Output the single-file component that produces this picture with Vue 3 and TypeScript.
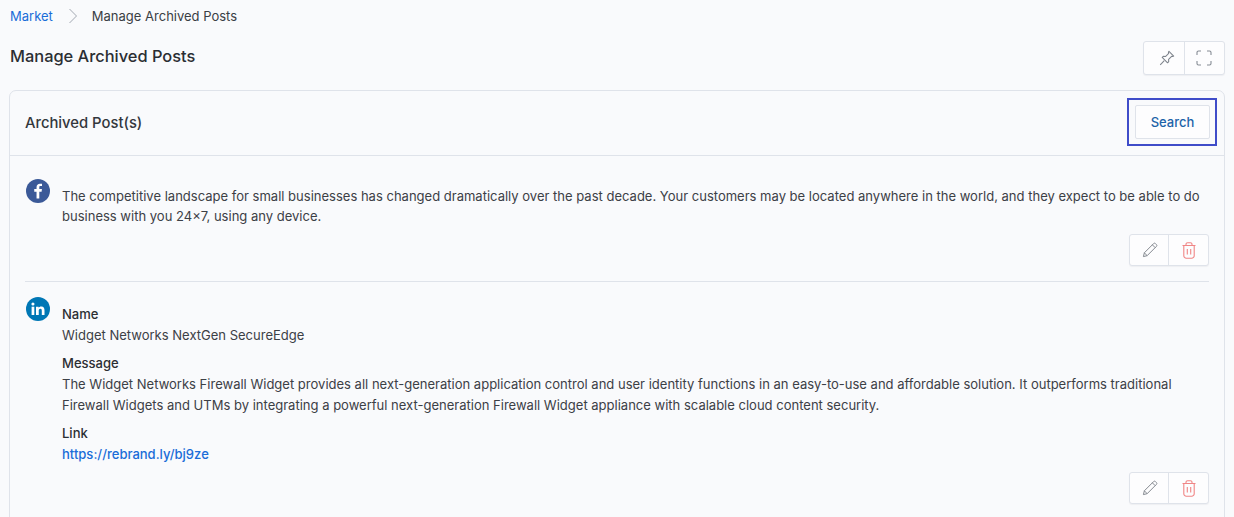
<script setup lang="ts">
interface Post {
  id: number;
  network: 'facebook' | 'linkedin';
}

const posts: Post[] = [
  { id: 1, network: 'facebook' },
  { id: 2, network: 'linkedin' },
];
</script>

<template>
  <div class="page">
    <!-- Breadcrumb -->
    <nav class="crumbs">
      <a class="crumb-link">Market</a>
      <svg class="crumb-sep" width="10" height="16" viewBox="0 0 10 16" fill="none">
        <path d="M1.500 1l7 7-7 7" stroke="#a3a9b3" stroke-width="1" />
      </svg>
      <span class="crumb-current">Manage Archived Posts</span>
    </nav>

    <!-- Title row -->
    <div class="title-row">
      <h1 class="title">Manage Archived Posts</h1>
      <div class="btn-group">
        <button class="tool-btn">
          <svg class="pin-icon" width="16" height="16" viewBox="0 0 17 17" fill="none" stroke="#7d838b" stroke-width="1.100">
            <path d="M10.600 1.400l5 5-1 .6-1.200-.3-3.200 3.200.1 2.500-1.200 1.200-5.700-5.700 1.200-1.200 2.500.1 3.200-3.200-.3-1.200z" stroke-linejoin="round" />
            <path d="M5.600 11.400L1.300 15.700" />
          </svg>
        </button>
        <button class="tool-btn">
          <svg class="expand-icon" width="16" height="16" viewBox="0 0 16 16" fill="none" stroke="#868c94" stroke-width="1.100">
            <path d="M1 5V2.500A1.500 1.500 0 0 1 2.500 1H5M11 1h2.500A1.500 1.500 0 0 1 15 2.500V5M15 11v2.500a1.500 1.500 0 0 1-1.500 1.500H11M5 15H2.500A1.500 1.500 0 0 1 1 13.500V11" />
          </svg>
        </button>
      </div>
    </div>

    <!-- Card -->
    <section class="card">
      <header class="card-head">
        <h2 class="card-title">Archived Post(s)</h2>
        <div class="search-focus">
          <button class="search-btn">Search</button>
        </div>
      </header>

      <div class="card-body">
        <article v-for="post in posts" :key="post.id" class="post" :class="post.network">
          <div class="post-row">
            <svg v-if="post.network === 'facebook'" class="net-icon" viewBox="0 0 24 24">
              <circle cx="12" cy="12" r="12" fill="#3b5998" />
              <path d="M13.300 19.500v-6.800h2.300l.35-2.650H13.300V8.400c0-.77.21-1.290 1.320-1.290h1.400V4.730a18 18 0 0 0-2.050-.1c-2.030 0-3.420 1.240-3.420 3.510v1.910H8.250v2.650h2.300v6.800z" fill="#fff" />
            </svg>
            <svg v-else class="net-icon" viewBox="0 0 24 24">
              <circle cx="12" cy="12" r="12" fill="#0077b5" />
              <rect x="5.600" y="9.700" width="2.700" height="8.300" fill="#fff" />
              <circle cx="6.950" cy="7.050" r="1.550" fill="#fff" />
              <path d="M10 9.700h2.600v1.150c.4-.72 1.350-1.350 2.700-1.350 2.650 0 3.200 1.700 3.200 4V18h-2.700v-3.900c0-1 0-2.250-1.400-2.250s-1.650 1.070-1.650 2.170V18H10z" fill="#fff" />
            </svg>

            <div v-if="post.network === 'facebook'" class="post-text">
              <p class="para">The competitive landscape for small businesses has changed dramatically over the past decade. Your customers may be located anywhere in the world, and they expect to be able to do business with you 24×7, using any device.</p>
            </div>
            <div v-else class="post-text">
              <div class="field">
                <div class="label">Name</div>
                <div class="para">Widget Networks NextGen SecureEdge</div>
              </div>
              <div class="field">
                <div class="label">Message</div>
                <div class="para">The Widget Networks Firewall Widget provides all next-generation application control and user identity functions in an easy-to-use and affordable solution. It outperforms traditional Firewall Widgets and UTMs by integrating a powerful next-generation Firewall Widget appliance with scalable cloud content security.</div>
              </div>
              <div class="field">
                <div class="label">Link</div>
                <a class="link">https://rebrand.ly/bj9ze</a>
              </div>
            </div>
          </div>

          <div class="post-actions">
            <div class="btn-group">
              <button class="act-btn edit-btn">
                <svg class="pencil-icon" width="16" height="16" viewBox="0 0 17 17" fill="none" stroke="#7d828a" stroke-width="1">
                  <path d="M1.500 15.500l1-4L12.300 1.700a1.400 1.400 0 0 1 2 0l1 1a1.400 1.400 0 0 1 0 2L5.500 14.500z" stroke-linejoin="round" />
                  <path d="M2.500 11.500l3 3M11 3l3 3" />
                </svg>
              </button>
              <button class="act-btn">
                <svg width="14" height="17" viewBox="0 0 14 17" fill="none" stroke="#f08585" stroke-width="1.100">
                  <path d="M.5 3.500h13M4 3.500V2.300A1.500 1.500 0 0 1 5.500.8h3A1.500 1.500 0 0 1 10 2.300v1.200" />
                  <path d="M1.800 3.500v10.200a2.500 2.500 0 0 0 2.500 2.500h5.400a2.500 2.500 0 0 0 2.500-2.500V3.500" />
                  <path d="M5.300 7v5.500M8.700 7v5.500" />
                </svg>
              </button>
            </div>
          </div>
        </article>
      </div>
    </section>
  </div>
</template>

<style scoped>
.page {
  height: 517px;
  overflow: hidden;
  box-sizing: border-box;
  padding: 6px 9px 0 10px;
  background: #f9fafc;
  font-family: Inter, "Liberation Sans", sans-serif;
  color: #33373d;
}

.crumbs {
  display: flex;
  align-items: center;
  height: 20px;
  font-size: 13px;
}

.crumb-link {
  color: #1a6dd8;
}

.crumb-sep {
  margin: 0 14px 0 15px;
}

.crumb-current {
  color: #3a3e44;
}

.title-row {
  display: flex;
  align-items: flex-start;
  justify-content: space-between;
  margin-top: 15px;
}

.title {
  margin: 3px 0 0;
  font-size: 16.400px;
  line-height: 24px;
  font-weight: 500;
  color: #2b2e33;
}

.btn-group {
  display: flex;
  background: #fdfdfe;
  border: 1px solid #dfe3ea;
  border-radius: 3px;
  box-shadow: 0 1px 1px rgba(30, 40, 60, 0.05);
}

.tool-btn,
.act-btn {
  display: flex;
  align-items: center;
  justify-content: center;
  padding: 0;
  background: transparent;
  border: 0;
}

.tool-btn {
  width: 40px;
  height: 32px;
}

.tool-btn + .tool-btn,
.act-btn + .act-btn {
  border-left: 1px solid #dfe3ea;
}

.pin-icon {
  margin-left: 5px;
}

.expand-icon {
  margin-right: 2px;
}

.card {
  margin: 15px 0 0 -1px;
  height: 500px;
  background: #f9fafc;
  border: 1px solid #dfe3ea;
  border-radius: 7px;
}

.card-head {
  display: flex;
  align-items: center;
  justify-content: space-between;
  height: 64px;
  padding: 0 7px 0 15px;
  border-bottom: 1px solid #dfe3ea;
}

.card-title {
  margin: 0;
  font-size: 14.800px;
  font-weight: 500;
  color: #33373d;
}

.search-focus {
  margin-bottom: 2px;
  padding: 5px 5px 5px 6px;
  border: 2px solid #3f4cc9;
}

.search-btn {
  display: block;
  width: 75px;
  height: 34px;
  padding: 0;
  background: #fdfdfe;
  border: 1px solid #dfe3ea;
  border-radius: 2px;
  color: #1c63a8;
  font-family: inherit;
  font-size: 13px;
  font-weight: 500;
}

.card-body {
  padding: 0 15px;
}

.post {
  padding: 23px 0 15px;
}

.post + .post {
  padding-top: 15px;
}

.post.facebook {
  border-bottom: 1px solid #dfe3ea;
}

.post-row {
  display: flex;
  align-items: flex-start;
  gap: 12px;
}

.net-icon {
  flex: none;
  width: 24px;
  height: 24px;
  margin-left: 1px;
}

.post-text {
  flex: 1;
  padding-top: 7px;
  font-size: 13.020px;
  line-height: 21px;
  color: #3c4046;
}

.facebook .post-text {
  line-height: 20px;
}

.para {
  margin: 0;
}

.field + .field {
  margin-top: 7px;
}

.label {
  color: #2b2e33;
  font-weight: 500;
}

.link {
  color: #1a6dd8;
  font-weight: 500;
}

.post-actions {
  display: flex;
  justify-content: flex-end;
  margin-top: 7px;
}

.facebook .post-actions {
  margin-top: 8px;
}

.act-btn {
  width: 40px;
  height: 30px;
}

.edit-btn {
  width: 38px;
}

.pencil-icon {
  margin-left: 2px;
}
</style>

<style>
html,
body {
  margin: 0;
  background: #f9fafc;
}
</style>
